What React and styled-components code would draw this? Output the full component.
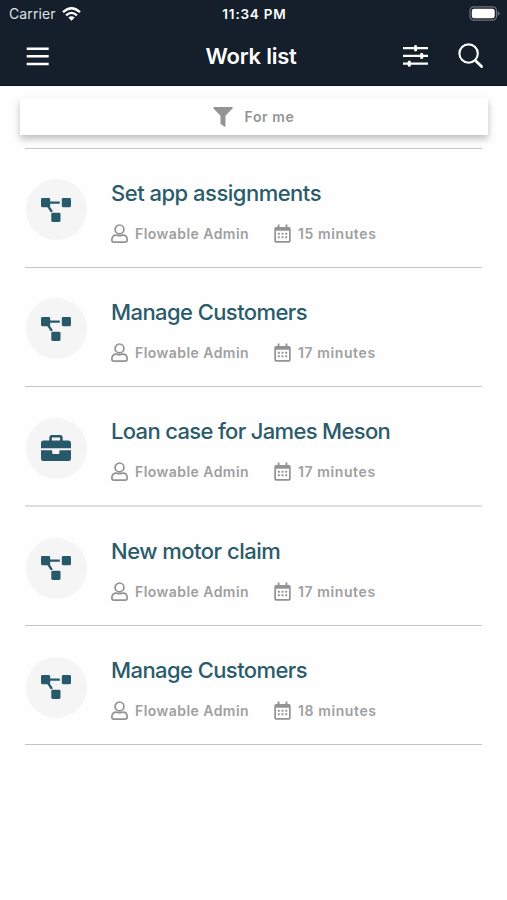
import React from "react";
import styled, { createGlobalStyle } from "styled-components";

const GlobalStyle = createGlobalStyle`
  * { box-sizing: border-box; }
  body {
    margin: 0;
    background: #fff;
    font-family: Inter, "Liberation Sans", sans-serif;
    -webkit-font-smoothing: antialiased;
  }
`;

const Screen = styled.div`
  width: 507px;
  height: 900px;
  overflow: hidden;
  background: #fefefe;
`;

const Header = styled.header`
  height: 86px;
  background: #151e2b;
  color: #fff;
  border-bottom: 1px solid #0d151f;
`;

const StatusBar = styled.div`
  height: 27px;
  padding: 0 7px 0 9px;
  display: grid;
  grid-template-columns: 1fr auto 1fr;
  align-items: center;
`;

const Carrier = styled.div`
  display: flex;
  align-items: center;
  gap: 6px;
  font-size: 14px;
  letter-spacing: 0.1px;
  color: #dfe2e5;
`;

const Clock = styled.div`
  font-size: 13.5px;
  font-weight: 600;
  letter-spacing: 0.8px;
`;

const Battery = styled.svg`
  justify-self: end;
`;

const NavBar = styled.div`
  height: 58px;
  padding: 0 23px 0 26px;
  display: grid;
  grid-template-columns: 1fr auto 1fr;
  align-items: center;
`;

const Title = styled.h1`
  margin: 0 8px 0 0;
  font-size: 22px;
  font-weight: 600;
  letter-spacing: -0.25px;
`;

const Actions = styled.div`
  display: flex;
  align-items: center;
  justify-content: flex-end;
  gap: 30px;
`;

const IconButton = styled.button`
  display: flex;
  padding: 0;
  border: 0;
  background: none;
  color: inherit;
`;

const FilterBar = styled.button`
  display: flex;
  align-items: center;
  justify-content: center;
  gap: 12px;
  width: 468px;
  height: 37px;
  margin: 12px 0 0 20px;
  padding: 0 1px 0 0;
  border: 0;
  background: #fff;
  color: #949494;
  box-shadow: 0 4px 7px rgba(0, 0, 0, 0.25);
  font: 600 14px Inter, "Liberation Sans", sans-serif;
  letter-spacing: 0.6px;
`;

const List = styled.ul`
  list-style: none;
  margin: 12.6px 25px 0;
  padding: 0;
  border-top: 1px solid #c6c6c6;
`;

const Row = styled.li`
  display: flex;
  height: ${(p) => (p.$softDivider ? "120px" : "119.2px")};
  padding-top: 30.6px;
  gap: 24.5px;
  border-bottom: ${(p) => (p.$softDivider ? "2px solid #dedede" : "1px solid #c6c6c6")};
`;

const Avatar = styled.div`
  display: flex;
  align-items: center;
  justify-content: center;
  width: 61px;
  height: 61px;
  margin-left: 0.5px;
  border-radius: 50%;
  background: #f5f5f5;
  color: #28596b;
`;

const TaskTitle = styled.h2`
  margin: -0.6px 0 0;
  height: 28px;
  line-height: 28px;
  font-size: 22px;
  font-weight: 500;
  letter-spacing: ${(p) => p.$spacing};
  color: #2a5b6b;
  white-space: nowrap;
`;

const Meta = styled.div`
  display: grid;
  grid-template-columns: 163px auto;
  margin-top: 17.1px;
`;

const MetaItem = styled.div`
  display: flex;
  align-items: center;
  gap: 7px;
  height: 19px;
  font-size: 14px;
  font-weight: 600;
  letter-spacing: ${(p) => p.$spacing};
  color: #a0a0a0;
  white-space: nowrap;
`;

const ProcessIcon = () => (
  <svg width="30" height="24" viewBox="0 0 30 24" fill="currentColor">
    <path d="M8 4.6H18.8M6 6.4L10.9 13.9" stroke="currentColor" strokeWidth="2.4" />
    <rect x="0" y="0" width="9.2" height="9.2" rx="1.4" />
    <rect x="20.8" y="0" width="9.2" height="9.2" rx="1.4" />
    <rect x="10.3" y="14.8" width="9.2" height="9.2" rx="1.4" />
  </svg>
);

const CaseIcon = () => (
  <svg width="30" height="26" viewBox="0 0 30 26" fill="currentColor">
    <path d="M9.6 6V2.5Q9.6 1.3 10.8 1.3H19.2Q20.4 1.3 20.4 2.5V6" fill="none" stroke="currentColor" strokeWidth="2.6" />
    <path d="M2.8 5.5H27.2Q30 5.5 30 8.3V13.3H0V8.3Q0 5.5 2.8 5.5Z" />
    <path d="M0 15.3H11.2V17.9Q11.2 18.9 12.2 18.9H17.4Q18.4 18.9 18.4 17.9V15.3H30V23.2Q30 26 27.2 26H2.8Q0 26 0 23.2Z" />
  </svg>
);

const UserIcon = () => (
  <svg width="17" height="19" viewBox="0 0 17 19" fill="none" stroke="#939393" strokeWidth="1.7">
    <circle cx="8.5" cy="5.4" r="4.4" />
    <path d="M5.1 11.1C2.6 11.1.9 12.9.9 15.4V16.3Q.9 18.1 2.7 18.1H14.3Q16.1 18.1 16.1 16.3V15.4C16.1 12.9 14.4 11.1 11.9 11.1C10.9 11.1 10.3 11.7 8.5 11.7S6.1 11.1 5.1 11.1Z" />
  </svg>
);

const CalendarIcon = () => (
  <svg width="17" height="19" viewBox="0 0 17 19" fill="#939393">
    <path d="M3.6.6H5.5V3H11.5V.6H13.4V3H15Q16.7 3 16.7 4.7V17Q16.7 18.7 15 18.7H2Q.3 18.7.3 17V4.7Q.3 3 2 3H3.6ZM2 6.8V16.4Q2 17 2.6 17H14.4Q15 17 15 16.4V6.8Z" fillRule="evenodd" />
    {[3.8, 7.5, 11.2].map((x) =>
      [8.7, 12.2].map((y) => <rect key={`${x}-${y}`} x={x} y={y} width="2" height="2" rx=".4" />)
    )}
  </svg>
);

const tasks = [
  { title: "Set app assignments", age: "15 minutes", spacing: "-0.5px" },
  { title: "Manage Customers", age: "17 minutes", spacing: "-0.58px" },
  { title: "Loan case for James Meson", age: "17 minutes", spacing: "-0.66px", isCase: true },
  { title: "New motor claim", age: "17 minutes", spacing: "-0.51px" },
  { title: "Manage Customers", age: "18 minutes", spacing: "-0.58px" },
];

export default function App() {
  return (
    <Screen>
      <GlobalStyle />
      <Header>
        <StatusBar>
          <Carrier>
            Carrier
            <svg width="19" height="14" viewBox="0 0 19 14" fill="none" stroke="#fff" strokeWidth="2.3">
              <path d="M1 5.2Q9.5-2.7 18 5.2M4.1 8.3Q9.5 3.4 14.9 8.3" />
              <path d="M6.3 10.6Q9.5 7.9 12.7 10.6L9.5 13.8Z" fill="#fff" stroke="none" />
            </svg>
          </Carrier>
          <Clock>11:34 PM</Clock>
          <Battery width="31" height="15" viewBox="0 0 31 15">
            <rect x="1" y=".9" width="26.5" height="13.2" rx="3.8" fill="none" stroke="#6d737c" strokeWidth="1.2" />
            <rect x="2.8" y="2.7" width="22.9" height="9.6" rx="2.2" fill="#fff" />
            <path d="M28.8 5.2Q30.6 6 30.6 7.5T28.8 9.8Z" fill="#6d737c" />
          </Battery>
        </StatusBar>
        <NavBar>
          <IconButton aria-label="Menu">
            <svg width="23" height="19" viewBox="0 0 23 19" stroke="#fff" strokeWidth="2.5">
              <path d="M.7 1.7H22.7M.7 9.3H22.7M.7 16.9H22.7" />
            </svg>
          </IconButton>
          <Title>Work list</Title>
          <Actions>
            <IconButton aria-label="Options">
              <svg width="25" height="22" viewBox="0 0 25 22" stroke="#fff">
                <path d="M0 3.2H25M0 10.9H25M0 18.6H25" strokeWidth="2.2" />
                <path d="M12.6 1.6V4.8M18.7 9.3V12.5M6.3 17V20.2" strokeWidth="3.2" strokeLinecap="round" />
              </svg>
            </IconButton>
            <IconButton aria-label="Search">
              <svg width="26" height="26" viewBox="0 0 26 26" fill="none" stroke="#fff" strokeLinecap="round">
                <circle cx="10.6" cy="10.6" r="9.2" strokeWidth="2.1" />
                <path d="M17.4 17.4L23.6 23.5" strokeWidth="2.8" />
              </svg>
            </IconButton>
          </Actions>
        </NavBar>
      </Header>
      <FilterBar>
        <svg width="20" height="20" viewBox="0 0 20 20" fill="currentColor">
          <path d="M.9 0H19.1Q20.3.6 19.5 1.5L12.5 8.8V18.9Q12.4 20.1 11.2 19.5L8 17.2Q7.5 16.8 7.5 16.2V8.8L.5 1.5Q-.3.6.9 0Z" />
        </svg>
        For me
      </FilterBar>
      <List>
        {tasks.map((task, i) => (
          <Row key={i} $softDivider={i === 2}>
            <Avatar>{task.isCase ? <CaseIcon /> : <ProcessIcon />}</Avatar>
            <div>
              <TaskTitle $spacing={task.spacing}>{task.title}</TaskTitle>
              <Meta>
                <MetaItem $spacing="0.45px"><UserIcon />Flowable Admin</MetaItem>
                <MetaItem $spacing="0.6px"><CalendarIcon />{task.age}</MetaItem>
              </Meta>
            </div>
          </Row>
        ))}
      </List>
    </Screen>
  );
}
